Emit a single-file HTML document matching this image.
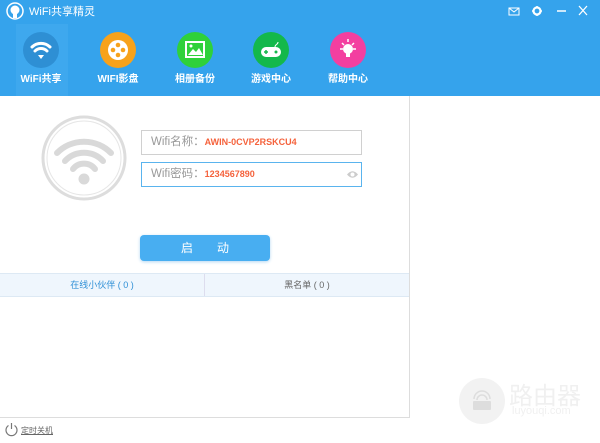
<!DOCTYPE html>
<html><head><meta charset="utf-8"><style>
*{margin:0;padding:0;box-sizing:border-box}
body{width:600px;height:443px;overflow:hidden;background:#fff;font-family:"Liberation Sans","Noto Sans CJK SC",sans-serif;position:relative}
.hdr{position:absolute;left:0;top:0;width:600px;height:96px;background:#35a3ec}
.abs{position:absolute}
.tab{position:absolute;top:32px;width:70px;text-align:center;color:#fff;font-size:10px;font-weight:bold;line-height:12px}
.ic{width:36px;height:36px;border-radius:50%;margin:0 auto 6px;position:relative}
.inp{position:absolute;left:141px;width:221px;height:25px;border:1px solid #d0d0d0;font-size:11.5px;color:#999;padding-left:9px;line-height:23px}
.inp b{color:#f5623c;font-size:9px}
</style></head><body>
<div class="hdr"></div>
<div class="abs" style="left:16px;top:24px;width:52px;height:72px;background:#3ea8ee"></div>
<svg class="abs" style="left:5px;top:2px" width="20" height="18" viewBox="0 0 20 18"><circle cx="10" cy="9" r="8" fill="none" stroke="#fff" stroke-width="1.5"/><circle cx="10" cy="8" r="4.5" fill="#fff"/><rect x="8" y="11" width="4" height="5" fill="#fff"/></svg>
<div class="abs" style="left:29px;top:3px;color:#fff;font-size:11px">WiFi共享精灵</div>
<svg class="abs" style="left:508px;top:5px" width="86" height="12" viewBox="0 0 86 12"><rect x="1" y="3" width="10" height="7" fill="none" stroke="#fff"/><path d="M1 3l5 4 5-4" stroke="#fff" fill="none"/><circle cx="29" cy="6" r="3.5" fill="none" stroke="#fff" stroke-width="2.2"/><path d="M29 1v2M29 9v2M24 6h2M32 6h2" stroke="#fff" stroke-width="1.5"/><path d="M49 6h9" stroke="#fff" stroke-width="1.5"/><path d="M71 1l8 9M79 1l-8 9" stroke="#fff" stroke-width="1.3"/></svg>
<div class="tab" style="left:6px"><div class="ic" style="background:#2e8fd4"><svg width="36" height="36" viewBox="0 0 36 36"><path d="M9 15a13 13 0 0118 0M12 19a8.5 8.5 0 0112 0" stroke="#fff" stroke-width="3" fill="none" stroke-linecap="round"/><path d="M15 23l3 4 3-4z" fill="#fff"/></svg></div>WiFi共享</div>
<div class="tab" style="left:83px"><div class="ic" style="background:#f7a21b"><svg width="36" height="36" viewBox="0 0 36 36"><circle cx="18" cy="18" r="10" fill="#fff"/><circle cx="18" cy="13" r="2.3" fill="#f7a21b"/><circle cx="18" cy="23" r="2.3" fill="#f7a21b"/><circle cx="13" cy="18" r="2.3" fill="#f7a21b"/><circle cx="23" cy="18" r="2.3" fill="#f7a21b"/></svg></div>WIFI影盘</div>
<div class="tab" style="left:160px"><div class="ic" style="background:#2fd13a"><svg width="36" height="36" viewBox="0 0 36 36"><rect x="9" y="10" width="18" height="15" fill="none" stroke="#fff" stroke-width="2"/><path d="M11 23l5-6 3 3 3-4 4 7z" fill="#fff"/><circle cx="14" cy="14" r="1.5" fill="#fff"/></svg></div>相册备份</div>
<div class="tab" style="left:236px"><div class="ic" style="background:#14b84b"><svg width="36" height="36" viewBox="0 0 36 36"><rect x="8" y="15" width="20" height="10" rx="5" fill="#fff"/><path d="M22 15c0-3 3-2 3-5" stroke="#fff" fill="none"/><path d="M11 20h4M13 18v4" stroke="#14b84b" stroke-width="1.5"/><circle cx="23" cy="20" r="1.5" fill="#14b84b"/></svg></div>游戏中心</div>
<div class="tab" style="left:313px"><div class="ic" style="background:#f33fa0"><svg width="36" height="36" viewBox="0 0 36 36"><circle cx="18" cy="17" r="5" fill="#fff"/><rect x="16" y="21" width="4" height="4" fill="#fff"/><path d="M18 7v3M10 17h3M23 17h3M12 11l2 2M24 11l-2 2" stroke="#fff" stroke-width="1.5"/></svg></div>帮助中心</div>

<div class="abs" style="left:0;top:96px;width:410px;height:322px;border:1px solid #ddd;border-top:none;border-left:none;background:#fff"></div>
<svg class="abs" style="left:40px;top:114px" width="88" height="88" viewBox="0 0 88 88"><circle cx="44" cy="44" r="41" fill="none" stroke="#ddd" stroke-width="3"/><circle cx="44" cy="44" r="37" fill="none" stroke="#e6e6e6" stroke-width="1"/><path d="M17 39a38 38 0 0154 0M25 47a26 26 0 0138 0M33 55a14 14 0 0122 0" stroke="#d9d9d9" stroke-width="6" fill="none" stroke-linecap="round"/><circle cx="44" cy="65" r="5.5" fill="#d9d9d9"/></svg>
<div class="inp" style="top:130px">Wifi名称：<b>AWIN-0CVP2RSKCU4</b></div>
<div class="inp" style="top:162px;border-color:#5ab4ee">Wifi密码：<b>1234567890</b><svg class="abs" style="right:2px;top:7px" width="13" height="9" viewBox="0 0 13 9"><path d="M1 4.5Q6.5-2 12 4.5Q6.5 11 1 4.5z" fill="#ccc"/><circle cx="6.5" cy="4.5" r="2" fill="#fff"/></svg></div>
<div class="abs" style="left:140px;top:235px;width:130px;height:26px;background:#48aef1;border-radius:4px;box-shadow:0 1px 3px #b5d8f2;color:#fff;font-size:12px;text-align:center;line-height:26px;letter-spacing:24px;padding-left:24px">启动</div>
<div class="abs" style="left:0;top:273px;width:409px;height:24px;background:#eff6fd;border-top:1px solid #dde9f4;border-bottom:1px solid #dde9f4;font-size:9px;line-height:22px"><span class="abs" style="left:0;width:204px;text-align:center;color:#2e8fd6">在线小伙伴 ( 0 )</span><span class="abs" style="left:204px;height:22px;border-left:1px solid #dde;width:205px;text-align:center;color:#666">黑名单 ( 0 )</span></div>

<svg class="abs" style="left:4px;top:422px" width="15" height="15" viewBox="0 0 15 15"><path d="M4.5 3.5a5.5 5.5 0 106 0" fill="none" stroke="#777" stroke-width="1.2"/><path d="M7.5 1v6" stroke="#777" stroke-width="1.2"/></svg>
<div class="abs" style="left:21px;top:425px;font-size:8px;color:#666;text-decoration:underline">定时关机</div>
<div class="abs" style="left:459px;top:378px;width:46px;height:46px;border-radius:50%;background:#f2f2f2"></div>
<svg class="abs" style="left:469px;top:388px" width="26" height="26" viewBox="0 0 26 26"><rect x="4" y="13" width="18" height="9" rx="1" fill="#ddd"/><path d="M8 12a5 5 0 0110 0M5 11a8 8 0 0116 0" stroke="#ddd" stroke-width="1.5" fill="none"/></svg>
<div class="abs" style="left:509px;top:376px;font-size:24px;color:#f0f0f0">路由器</div>
<div class="abs" style="left:512px;top:405px;font-size:11px;color:#f0f0f0">luyouqi.com</div>
</body></html>
